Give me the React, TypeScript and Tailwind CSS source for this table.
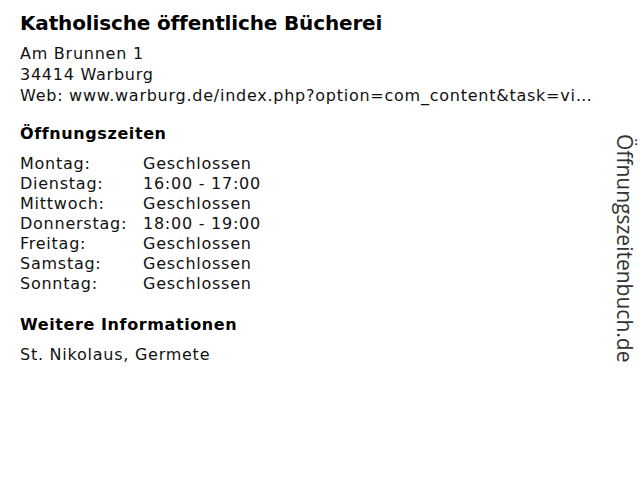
import React from 'react';

const hours: [string, string][] = [
  ['Montag:', 'Geschlossen'],
  ['Dienstag:', '16:00 - 17:00'],
  ['Mittwoch:', 'Geschlossen'],
  ['Donnerstag:', '18:00 - 19:00'],
  ['Freitag:', 'Geschlossen'],
  ['Samstag:', 'Geschlossen'],
  ['Sonntag:', 'Geschlossen'],
];

export default function App() {
  return (
    <div className="flex w-[640px] h-[480px] bg-white text-black overflow-hidden">
      {/* main listing */}
      <div className="flex-1 min-w-0 pl-5 pr-[1px] pt-[11px] font-['DejaVu_Sans',sans-serif] text-[16px] leading-[20px] tracking-[0.75px] text-[#111]">
        <h1 className="text-[20px] leading-[24px] font-bold tracking-[-0.15px] text-black">Katholische öffentliche Bücherei</h1>

        <div className="mt-[9px]">
          <div>Am Brunnen 1</div>
          <div className="mt-[1px]">34414 Warburg</div>
          <div className="mt-[1px] truncate">
            Web: www.warburg.de/index.php?option=com_content&amp;task=view&amp;id=123&amp;Itemid=45
          </div>
        </div>

        <h2 className="mt-[18px] text-[16px] font-bold tracking-[0.6px] text-black">Öffnungszeiten</h2>

        <div className="mt-[10px] grid grid-cols-[123px_1fr]">
          {hours.map(([day, time]) => (
            <React.Fragment key={day}>
              <div>{day}</div>
              <div>{time}</div>
            </React.Fragment>
          ))}
        </div>

        <h2 className="mt-[21px] text-[16px] font-bold tracking-[0.6px] text-black">Weitere Informationen</h2>

        <div className="mt-[10px]">St. Nikolaus, Germete</div>
      </div>

      {/* vertical brand label */}
      <div className="w-[44px] shrink-0 pt-[134px] pr-[3px] flex justify-end">
        <div className="[writing-mode:vertical-rl] font-['Open_Sans',sans-serif] text-[21px] leading-[24px] text-[#333]">
          Öffnungszeitenbuch.de
        </div>
      </div>
    </div>
  );
}
